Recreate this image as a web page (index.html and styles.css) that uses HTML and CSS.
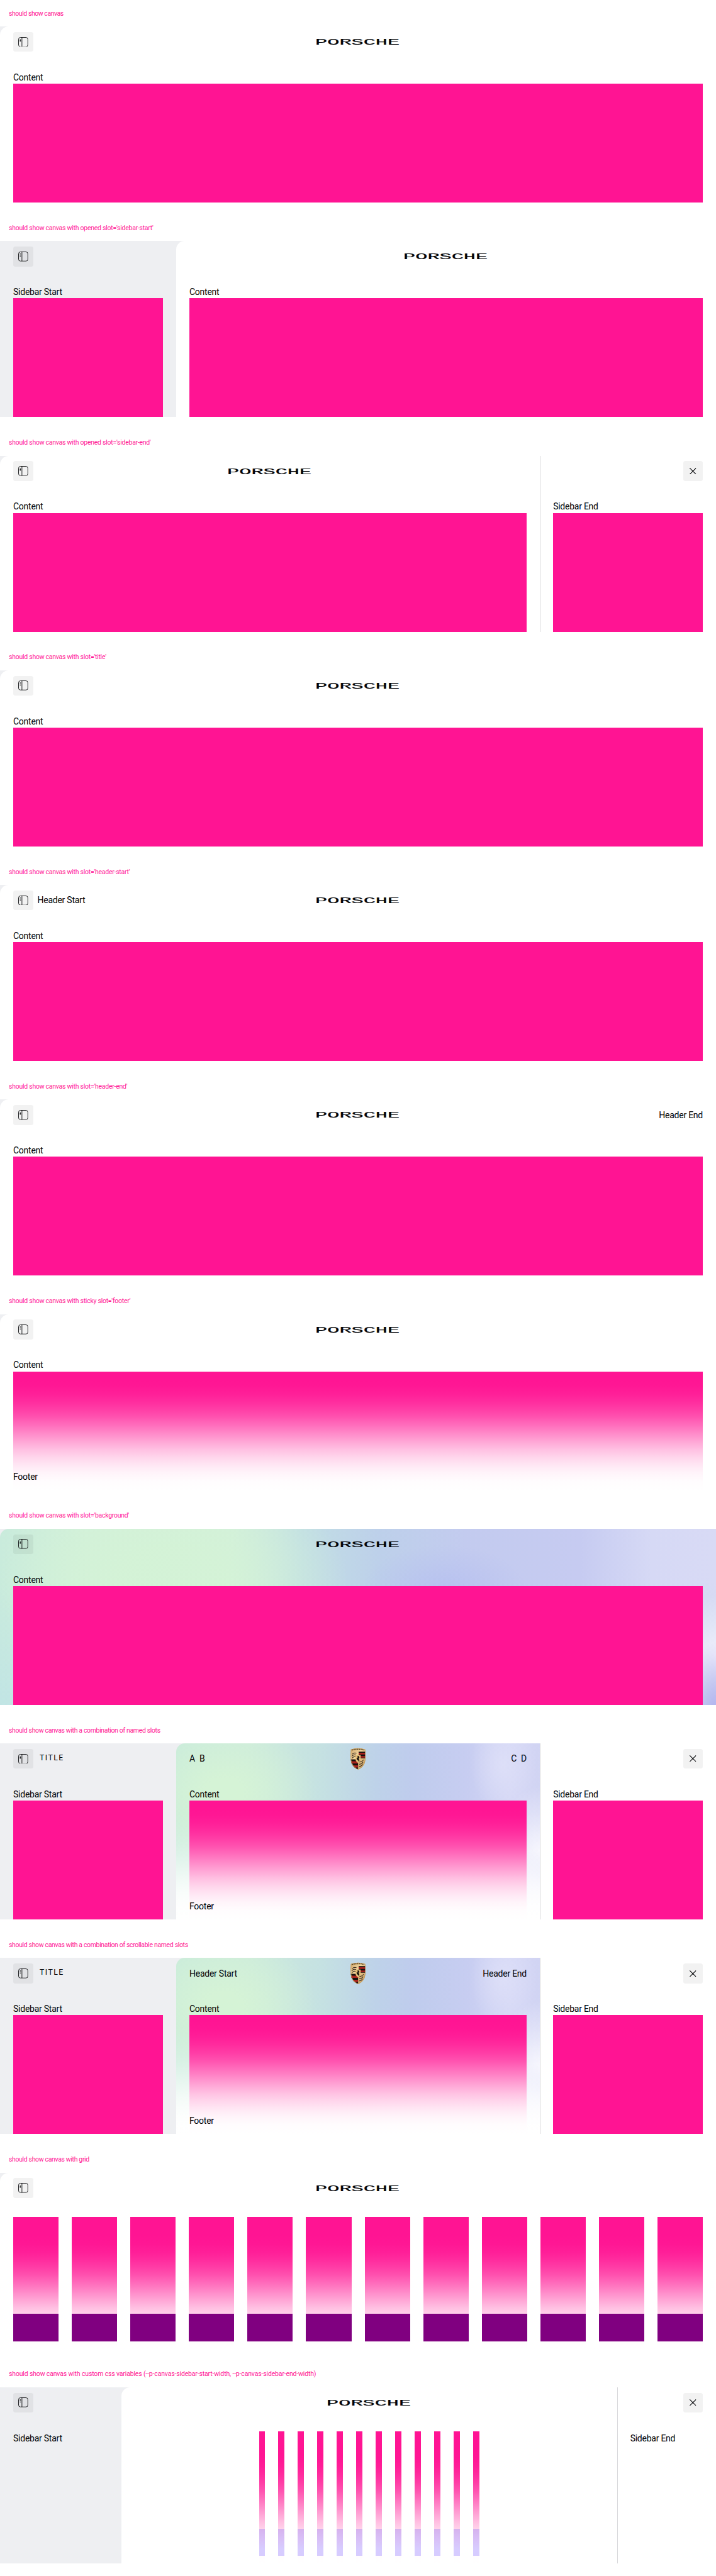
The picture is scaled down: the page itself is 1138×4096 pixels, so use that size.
FILE: index.html
```html
<!DOCTYPE html>
<html lang="en">
<head>
<meta charset="utf-8">
<title>Canvas</title>
<link rel="stylesheet" href="styles.css">
</head>
<body>
<svg class="defs" width="0" height="0" aria-hidden="true">
  <symbol id="i-sidebar" viewBox="0 0 18 18">
    <rect x=".6" y=".6" width="16.8" height="16.8" rx="3.4" fill="none" stroke="currentColor"/>
    <path d="M6.7.6v16.8" fill="none" stroke="currentColor"/>
    <path d="M2.8 4.3h2M2.8 6.3h2M2.8 8.3h2" fill="none" stroke="currentColor"/>
  </symbol>
  <symbol id="i-close" viewBox="0 0 12 12">
    <path d="M.3.3l11.4 11.4M11.7.3L.3 11.7" fill="none" stroke="currentColor" stroke-width="1.200"/>
  </symbol>
  <symbol id="crest" viewBox="0 0 30 40">
    <defs>
      <linearGradient id="gold" x1="0" y1="0" x2="1" y2="1">
        <stop offset="0" stop-color="#c9a066"/><stop offset=".4" stop-color="#f3d49b"/><stop offset="1" stop-color="#b98d50"/>
      </linearGradient>
      <clipPath id="shield"><path d="M2 3Q15-1.5 28 3Q29.6 20 27 28Q23 37 15 39.6Q7 37 3 28Q.4 20 2 3z"/></clipPath>
    </defs>
    <g clip-path="url(#shield)">
      <path d="M0 0h30v40H0z" fill="url(#gold)"/>
      <path d="M3.500 4.200Q15 .8 26.500 4.200" fill="none" stroke="#54401f" stroke-width="2.200" stroke-dasharray="2.200 1"/>
      <path d="M16 7.200h13v12H16z" fill="#17110f"/>
      <path d="M16 9.200h13v3.200H16zM16 15h13v3H16z" fill="#a8231e"/>
      <path d="M1 21h14v18H1z" fill="#17110f"/>
      <path d="M1 24.500h14v4H1zM1 32h14v4H1z" fill="#a8231e"/>
      <path d="M4 12q4-4 8-2M3.500 15.500q4-4 8-2M4 19q4-4 7-2M17 26q5 0 8-4M17 30q5 0 7-4M17 34q4 0 6-4" fill="none" stroke="#2b2118" stroke-width="1.200"/>
      <path d="M10.300 13.500h9.400v8q-1 4.500-4.700 6q-3.700-1.500-4.700-6z" fill="#e5be78"/>
      <path d="M14 14.500l2.500 1 1.200 3-1.500-.6.3 3 1 2.200-1.800 2.400-.2-2.500-2.300-1-1.200-3.500 1.500.5.800-2z" fill="#15100d"/>
      <path d="M2 3Q15-1.500 28 3Q29.600 20 27 28Q23 37 15 39.600Q7 37 3 28Q.4 20 2 3z" fill="none" stroke="#c69b5b" stroke-width="1.800"/>
    </g>
  </symbol>
</svg>

<section class="case">
  <h2 class="label label-short">should show canvas</h2>
  <div class="canvas">
    <main class="main">
      <header class="bar"><div class="start"><button class="btn"><svg class="ico"><use href="#i-sidebar"/></svg></button></div><svg class="logo" viewBox="0 0 150 10"><text transform="scale(2.4 1)" x="-.9" y="10">PORSCHE</text></svg><div class="end"></div></header>
      <div class="body">Content<div class="block"></div></div>
    </main>
  </div>
</section>

<section class="case">
  <h2 class="label">should show canvas with opened slot='sidebar-start'</h2>
  <div class="canvas">
    <aside class="side">
      <header class="bar"><div class="start"><button class="btn"><svg class="ico"><use href="#i-sidebar"/></svg></button></div></header>
      <div class="body">Sidebar Start<div class="block"></div></div>
    </aside>
    <main class="main">
      <header class="bar"><div class="start"></div><svg class="logo" viewBox="0 0 150 10"><text transform="scale(2.4 1)" x="-.9" y="10">PORSCHE</text></svg><div class="end"></div></header>
      <div class="body">Content<div class="block"></div></div>
    </main>
  </div>
</section>

<section class="case">
  <h2 class="label">should show canvas with opened slot='sidebar-end'</h2>
  <div class="canvas">
    <main class="main">
      <header class="bar"><div class="start"><button class="btn"><svg class="ico"><use href="#i-sidebar"/></svg></button></div><svg class="logo" viewBox="0 0 150 10"><text transform="scale(2.4 1)" x="-.9" y="10">PORSCHE</text></svg><div class="end"></div></header>
      <div class="body">Content<div class="block"></div></div>
    </main>
    <aside class="side side-end">
      <header class="bar"><div class="end"><button class="btn"><svg class="ico close"><use href="#i-close"/></svg></button></div></header>
      <div class="body">Sidebar End<div class="block"></div></div>
    </aside>
  </div>
</section>

<section class="case">
  <h2 class="label">should show canvas with slot='title'</h2>
  <div class="canvas">
    <main class="main">
      <header class="bar"><div class="start"><button class="btn"><svg class="ico"><use href="#i-sidebar"/></svg></button></div><svg class="logo" viewBox="0 0 150 10"><text transform="scale(2.4 1)" x="-.9" y="10">PORSCHE</text></svg><div class="end"></div></header>
      <div class="body">Content<div class="block"></div></div>
    </main>
  </div>
</section>

<section class="case">
  <h2 class="label">should show canvas with slot='header-start'</h2>
  <div class="canvas">
    <main class="main">
      <header class="bar"><div class="start"><button class="btn"><svg class="ico"><use href="#i-sidebar"/></svg></button><span>Header Start</span></div><svg class="logo" viewBox="0 0 150 10"><text transform="scale(2.4 1)" x="-.9" y="10">PORSCHE</text></svg><div class="end"></div></header>
      <div class="body">Content<div class="block"></div></div>
    </main>
  </div>
</section>

<section class="case">
  <h2 class="label">should show canvas with slot='header-end'</h2>
  <div class="canvas">
    <main class="main">
      <header class="bar"><div class="start"><button class="btn"><svg class="ico"><use href="#i-sidebar"/></svg></button></div><svg class="logo" viewBox="0 0 150 10"><text transform="scale(2.4 1)" x="-.9" y="10">PORSCHE</text></svg><div class="end"><span>Header End</span></div></header>
      <div class="body">Content<div class="block"></div></div>
    </main>
  </div>
</section>

<section class="case">
  <h2 class="label">should show canvas with sticky slot='footer'</h2>
  <div class="canvas">
    <main class="main">
      <header class="bar"><div class="start"><button class="btn"><svg class="ico"><use href="#i-sidebar"/></svg></button></div><svg class="logo" viewBox="0 0 150 10"><text transform="scale(2.4 1)" x="-.9" y="10">PORSCHE</text></svg><div class="end"></div></header>
      <div class="body">Content<div class="block"></div></div>
      <footer class="footer">Footer</footer>
    </main>
  </div>
</section>

<section class="case">
  <h2 class="label">should show canvas with slot='background'</h2>
  <div class="canvas">
    <main class="main aurora">
      <header class="bar"><div class="start"><button class="btn"><svg class="ico"><use href="#i-sidebar"/></svg></button></div><svg class="logo" viewBox="0 0 150 10"><text transform="scale(2.4 1)" x="-.9" y="10">PORSCHE</text></svg><div class="end"></div></header>
      <div class="body">Content<div class="block"></div></div>
    </main>
  </div>
</section>

<section class="case">
  <h2 class="label label-plain">should show canvas with a combination of named slots</h2>
  <div class="canvas">
    <aside class="side">
      <header class="bar"><div class="start"><button class="btn"><svg class="ico"><use href="#i-sidebar"/></svg></button><span class="title">TITLE</span></div></header>
      <div class="body">Sidebar Start<div class="block"></div></div>
    </aside>
    <main class="main aurora aurora-narrow">
      <header class="bar"><div class="start"><span>A</span><span>B</span></div><svg class="crest"><use href="#crest"/></svg><div class="end"><span>C</span><span>D</span></div></header>
      <div class="body">Content<div class="block"></div></div>
      <footer class="footer">Footer</footer>
    </main>
    <aside class="side side-end">
      <header class="bar"><div class="end"><button class="btn"><svg class="ico close"><use href="#i-close"/></svg></button></div></header>
      <div class="body">Sidebar End<div class="block"></div></div>
    </aside>
  </div>
</section>

<section class="case">
  <h2 class="label label-plain">should show canvas with a combination of scrollable named slots</h2>
  <div class="canvas">
    <aside class="side">
      <header class="bar"><div class="start"><button class="btn"><svg class="ico"><use href="#i-sidebar"/></svg></button><span class="title">TITLE</span></div></header>
      <div class="body">Sidebar Start<div class="block"></div></div>
    </aside>
    <main class="main aurora aurora-narrow">
      <header class="bar"><div class="start"><span>Header Start</span></div><svg class="crest"><use href="#crest"/></svg><div class="end"><span>Header End</span></div></header>
      <div class="body">Content<div class="block"></div></div>
      <footer class="footer">Footer</footer>
    </main>
    <aside class="side side-end">
      <header class="bar"><div class="end"><button class="btn"><svg class="ico close"><use href="#i-close"/></svg></button></div></header>
      <div class="body">Sidebar End<div class="block"></div></div>
    </aside>
  </div>
</section>

<section class="case">
  <h2 class="label label-plain">should show canvas with grid</h2>
  <div class="canvas">
    <main class="main">
      <header class="bar"><div class="start"><button class="btn"><svg class="ico"><use href="#i-sidebar"/></svg></button></div><svg class="logo" viewBox="0 0 150 10"><text transform="scale(2.4 1)" x="-.9" y="10">PORSCHE</text></svg><div class="end"></div></header>
      <div class="body cols"><i></i><i></i><i></i><i></i><i></i><i></i><i></i><i></i><i></i><i></i><i></i><i></i></div>
      <footer class="footer cols foot-cols"><i></i><i></i><i></i><i></i><i></i><i></i><i></i><i></i><i></i><i></i><i></i><i></i></footer>
    </main>
  </div>
</section>

<section class="case">
  <h2 class="label label-long">should show canvas with custom css variables (--p-canvas-sidebar-start-width, --p-canvas-sidebar-end-width)</h2>
  <div class="canvas custom">
    <aside class="side">
      <header class="bar"><div class="start"><button class="btn"><svg class="ico"><use href="#i-sidebar"/></svg></button></div></header>
      <div class="body">Sidebar Start</div>
    </aside>
    <main class="main">
      <header class="bar"><div class="start"></div><svg class="logo" viewBox="0 0 150 10"><text transform="scale(2.4 1)" x="-.9" y="10">PORSCHE</text></svg><div class="end"></div></header>
      <div class="body cols"><i></i><i></i><i></i><i></i><i></i><i></i><i></i><i></i><i></i><i></i><i></i><i></i></div>
      <footer class="footer cols foot-cols lilac"><i></i><i></i><i></i><i></i><i></i><i></i><i></i><i></i><i></i><i></i><i></i><i></i></footer>
    </main>
    <aside class="side side-end">
      <header class="bar"><div class="end"><button class="btn"><svg class="ico close"><use href="#i-close"/></svg></button></div></header>
      <div class="body">Sidebar End</div>
    </aside>
  </div>
</section>
</body>
</html>
```
FILE: styles.css
```css
* { box-sizing: border-box; }
html { background: #fff; font-size: 14px; }
body {
  margin: 0;
  font: 1rem/1.5rem Roboto, "Liberation Sans", sans-serif;
  letter-spacing: -.245px;
  color: #010205;
}
.defs { position: absolute; }

.case { height: 24.375rem; overflow: hidden; }
.label {
  margin: 0;
  height: 3rem;
  padding: .75rem 1rem;
  font-size: .75rem;
  font-weight: 400;
  color: #ff1493;
  letter-spacing: -.26px;
  white-space: nowrap;
}
.label-short { letter-spacing: -.45px; }
.label-plain { letter-spacing: -.35px; }
.label-long { letter-spacing: -.16px; }

.canvas {
  --start-width: 20rem;
  --end-width: 20rem;
  display: flex;
  height: 20rem;
  overflow: hidden;
  background: #eeeff2;
}
.custom { --start-width: 13.75rem; --end-width: 11.25rem; }
.side { flex: none; width: var(--start-width); }
.side-end { width: var(--end-width); background: #fff; border-left: 1px solid #d8d8db; }
.side-end .bar, .side-end .body { padding-left: 1.4375rem; }
.main {
  flex: 1;
  min-width: 0;
  position: relative;
  background: #fff;
  border-top-left-radius: 1rem;
}

.bar { display: flex; align-items: center; height: 3.5rem; padding: 0 1.5rem; }
.start, .end { flex: 1; display: flex; align-items: center; gap: .5rem; }
.end { justify-content: flex-end; }
.start span, .end span { white-space: nowrap; padding-top: .0625rem; }
.start .title { font-size: .875rem; letter-spacing: 1.5px; padding: 0 0 0 .25rem; margin-top: -.125rem; }
.btn {
  display: grid;
  place-items: center;
  width: 2.25rem;
  height: 2.25rem;
  padding: 0;
  border: 0;
  border-radius: .25rem;
  background: rgba(20, 20, 10, .055);
  color: #010205;
}
.ico { width: 1.125rem; height: 1.125rem; }
.ico.close { width: .75rem; height: .75rem; }
.logo { width: 9.375rem; height: .625rem; overflow: visible; }
.logo text {
  font: 400 15.200px "Liberation Mono", monospace;
  letter-spacing: 0;
  fill: #010205;
  stroke: #010205;
  stroke-width: .45px;
  vector-effect: non-scaling-stroke;
}
.crest { width: 1.875rem; height: 2.5rem; }

.body { height: 16.5rem; padding: 1.5625rem 1.5rem 0; }
.block { height: 13.5rem; margin-top: -.0625rem; background: #ff1493; }

.footer {
  position: absolute;
  inset: 7.0625rem 0 0;
  padding: 10.6875rem 1.5rem 0;
  background: linear-gradient(rgba(255,255,255,0), rgba(255,255,255,.013) 8.1%, rgba(255,255,255,.049) 15.5%, rgba(255,255,255,.104) 22.5%, rgba(255,255,255,.175) 29%, rgba(255,255,255,.259) 35.3%, rgba(255,255,255,.352) 41.2%, rgba(255,255,255,.45) 47.1%, rgba(255,255,255,.55) 52.9%, rgba(255,255,255,.648) 58.8%, rgba(255,255,255,.741) 64.7%, rgba(255,255,255,.825) 71%, rgba(255,255,255,.896) 77.5%, rgba(255,255,255,.951) 84.5%, rgba(255,255,255,.987) 91.9%, #fff);
}

.cols { display: grid; grid-template-columns: repeat(12, 1fr); column-gap: 1.5rem; padding-top: 1.5rem; }
.cols i { background: #ff1493; }
.foot-cols { padding-top: 9rem; padding-bottom: .8125rem; }
.foot-cols i { background: #800080; }
.custom .cols { padding-left: calc(50% - 12.5rem); padding-right: calc(50% - 12.5rem); }
.foot-cols.lilac i { background: linear-gradient(#d5b2ee, #d8bdf5 30%, #d7ccff 75%); }

.aurora {
  background:
    radial-gradient(ellipse 52px 114px at 100% 105%, #b1b0ef, rgba(177,176,239,0)),
    radial-gradient(ellipse 79px 96px at 100% 72%, #f0effc, rgba(240,239,252,0)),
    radial-gradient(ellipse 131px 70px at 62% 34%, rgba(180,190,240,.75), rgba(180,190,240,0)),
    radial-gradient(ellipse 280px 175px at 24% 30%, rgba(212,243,214,.85) 30%, rgba(212,243,214,0)),
    linear-gradient(rgba(190,226,232,0) 30%, rgba(190,226,232,.7)),
    linear-gradient(90deg, #c9ebdc, #d2f0da 12%, #d2efdb 32%, #c2dfe4 42%, #bdd0ea 53%, #c3cbef 65%, #c6cbf1 81%, #d6d9f5 91%, #d8daf5);
}
.aurora-narrow {
  background:
    radial-gradient(ellipse 52px 44px at 100% 76%, #dcddf7, rgba(220,221,247,0)),
    radial-gradient(ellipse 70px 105px at 100% 62%, #f3f3fd, rgba(243,243,253,0)),
    radial-gradient(ellipse 52px 79px at 90% 12%, #dddff8, rgba(221,223,248,0)),
    radial-gradient(ellipse 149px 114px at 13% 28%, #d5f3d6 20%, rgba(213,243,214,0)),
    linear-gradient(90deg, #c9ebdc, #cdebdc 20%, #c5e1e2 40%, #bed2e9 55%, #bfcced 65%, #c7cdf1 80%, #d5d7f5 92%, #d1d4f3);
}
```
